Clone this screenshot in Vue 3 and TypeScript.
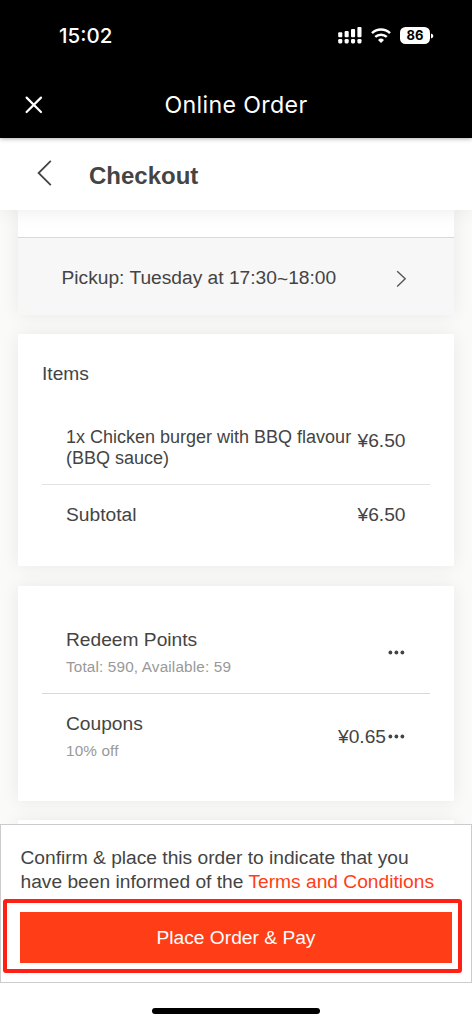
<script setup lang="ts">
interface OrderItem {
  name: string
  price: string
}

interface Benefit {
  title: string
  detail: string
  value: string
}

const items: OrderItem[] = [
  { name: '1x Chicken burger with BBQ flavour (BBQ sauce)', price: '¥6.50' },
]
const benefits: Benefit[] = [
  { title: 'Redeem Points', detail: 'Total: 590, Available: 59', value: '' },
  { title: 'Coupons', detail: '10% off', value: '¥0.65' },
]
const signalTops: number[] = [5.2, 4, 2, 0]
</script>

<template>
  <div class="phone">
    <header class="top">
      <div class="status">
        <span class="time">15:02</span>
        <div class="indicators">
          <svg class="signal" width="25" height="17" viewBox="0 0 25 17" fill="#fff">
            <template v-for="(top, i) in signalTops" :key="i">
              <rect :x="0.2 + i * 6.4" :y="top" width="4.1" :height="10.2 - top" rx="1" />
              <rect :x="0.2 + i * 6.4" y="12" width="4.1" height="4.4" rx="1.3" />
            </template>
          </svg>
          <svg class="wifi" width="20" height="15" viewBox="0 0 20 15" fill="none" stroke="#fff">
            <path d="M1 5.1A13.2 13.2 0 0 1 19 5.1" stroke-width="2.6" />
            <path d="M4.2 8.9A8.6 8.6 0 0 1 15.8 8.9" stroke-width="2.5" />
            <path d="M10 14.9L7 11.9Q10 9.2 13 11.9Z" fill="#fff" stroke="none" />
          </svg>
          <div class="battery"><span>86</span></div>
          <svg class="cap" width="3" height="6" viewBox="0 0 3 6"><path d="M0 .6Q2.4 1.4 2.4 3T0 5.4Z" fill="#fff" /></svg>
        </div>
      </div>
      <div class="appbar">
        <svg class="close" width="20" height="20" viewBox="0 0 20 20" fill="none" stroke="#fff" stroke-width="2.2" stroke-linecap="round">
          <path d="M2.6 2.6L17 17M17 2.6L2.6 17" />
        </svg>
        <span class="app-title">Online Order</span>
      </div>
    </header>

    <div class="page-head">
      <svg class="back" width="16" height="28" viewBox="0 0 16 28" fill="none" stroke="#444" stroke-width="1.8">
        <path d="M13.8 1.9L1.6 14L13.8 26.1" />
      </svg>
      <h1>Checkout</h1>
    </div>

    <main class="content">
      <section class="card pickup-card">
        <div class="pickup">
          <span>Pickup: Tuesday at 17:30<span class="tilde">~</span>18:00</span>
          <svg width="11" height="18" viewBox="0 0 11 18" fill="none" stroke="#555" stroke-width="1.4">
            <path d="M1.2 2.2L9.2 9.8L1.2 17.4" />
          </svg>
        </div>
      </section>

      <section class="card items-card">
        <h2>Items</h2>
        <div v-for="item in items" :key="item.name" class="item">
          <span class="name">{{ item.name }}</span>
          <span class="price">{{ item.price }}</span>
        </div>
        <div class="subtotal">
          <span>Subtotal</span>
          <span>¥6.50</span>
        </div>
      </section>

      <section class="card benefits-card">
        <div v-for="b in benefits" :key="b.title" class="benefit">
          <div class="labels">
            <span class="title">{{ b.title }}</span>
            <span class="detail">{{ b.detail }}</span>
          </div>
          <div class="value">
            <span>{{ b.value }}</span>
            <svg width="18" height="5" viewBox="0 0 18 5" fill="#444">
              <circle cx="2.4" cy="2.5" r="1.9" /><circle cx="8.4" cy="2.5" r="1.9" /><circle cx="14.4" cy="2.5" r="1.9" />
            </svg>
          </div>
        </div>
      </section>

      <section class="card next-card"></section>
    </main>

    <footer class="confirm">
      <p>Confirm &amp; place this order to indicate that you<br />have been informed of the <a>Terms and Conditions</a></p>
      <div class="highlight">
        <button type="button">Place Order &amp; Pay</button>
      </div>
    </footer>
    <div class="home"><i></i></div>
  </div>
</template>

<style>
html,
body {
  margin: 0;
  background: #fff;
  overflow: hidden;
}
</style>

<style scoped>
.phone {
  width: 472px;
  height: 1024px;
  display: flex;
  flex-direction: column;
  overflow: hidden;
  background: #fff;
  color: #444;
  font-family: "Liberation Sans", Arial, sans-serif;
  font-size: 19.2px;
}
.top {
  position: relative;
  z-index: 3;
  flex: none;
  height: 138px;
  background: #000;
  color: #fff;
  box-shadow: 0 0 5px rgba(0, 0, 0, 0.45);
  font-family: Inter, sans-serif;
}
.status {
  height: 70px;
  display: flex;
  justify-content: space-between;
  padding: 0 41px 0 59px;
}
.time {
  margin-top: 23px;
  font-size: 20.5px;
  line-height: 25px;
  font-weight: 550;
}
.indicators {
  display: flex;
  align-items: center;
  height: 17px;
  margin-top: 27px;
}
.wifi {
  margin: 0 9px 0 8px;
}
.battery {
  width: 30px;
  height: 17px;
  border-radius: 5.5px;
  background: #fff;
  color: #000;
  font-size: 13px;
  line-height: 17px;
  font-weight: 650;
  text-align: center;
}
.cap {
  margin-left: 0.5px;
  margin-right: -2.5px;
}
.appbar {
  height: 68px;
  display: grid;
  grid-template-columns: 1fr auto 1fr;
  align-items: center;
}
.close {
  margin: 1px 0 0 23.5px;
}
.app-title {
  margin-top: 2px;
  font-size: 23.2px;
  letter-spacing: 0.35px;
}
.page-head {
  position: relative;
  z-index: 2;
  flex: none;
  height: 72px;
  display: flex;
  align-items: center;
  gap: 36px;
  padding-left: 37px;
  box-sizing: border-box;
  background: #fff;
  box-shadow: 0 2px 18px rgba(0, 0, 0, 0.07);
}
.back {
  margin-top: -2px;
}
h1 {
  margin: 4px 0 0;
  font-size: 24px;
  line-height: 28px;
}
.content {
  flex: none;
  height: 614px;
  display: flex;
  flex-direction: column;
  padding: 0 18px;
  background: #fafaf9;
  overflow: hidden;
}
.card {
  flex: none;
  box-sizing: border-box;
  background: #fff;
  border-radius: 1px;
  box-shadow: 0 0 18px rgba(0, 0, 0, 0.075);
}
.pickup-card {
  height: 105px;
  padding-top: 27px;
}
.pickup {
  height: 78px;
  box-sizing: border-box;
  display: flex;
  align-items: center;
  justify-content: space-between;
  padding: 3px 47.5px 0 43.5px;
  border-top: 1px solid #d9d9d9;
  background: #f7f7f7;
}
.tilde {
  display: inline-block;
  transform: translateY(1px);
}
.items-card {
  height: 232px;
  margin-top: 19px;
  padding: 0 24px;
}
h2 {
  margin: 0;
  padding-top: 28.5px;
  font-size: 19.2px;
  line-height: 22px;
  font-weight: 400;
}
.item {
  height: 100px;
  box-sizing: border-box;
  display: flex;
  justify-content: space-between;
  padding: 42px 24.5px 0 24px;
  border-bottom: 1px solid #e2e2e2;
}
.name {
  width: 288px;
  font-size: 18px;
  line-height: 21.6px;
}
.price {
  padding-top: 3px;
  line-height: 22px;
}
.subtotal {
  display: flex;
  justify-content: space-between;
  padding: 19px 24.5px 0 24px;
  line-height: 22px;
}
.benefits-card {
  height: 215px;
  margin-top: 20px;
  padding: 23px 24px 0;
}
.benefit {
  height: 84px;
  box-sizing: border-box;
  display: flex;
  justify-content: space-between;
  align-items: center;
  padding: 0 24px;
}
.benefit:first-child {
  height: 85px;
  padding-top: 2px;
  border-bottom: 1px solid #d9d9d9;
}
.labels {
  display: flex;
  flex-direction: column;
  gap: 7px;
}
.title {
  line-height: 22px;
}
.detail {
  color: #999;
  font-size: 15.3px;
  line-height: 18px;
  letter-spacing: 0.15px;
}
.value {
  display: flex;
  align-items: center;
  gap: 2px;
}
.benefit:last-child .value {
  padding-top: 1px;
}
.next-card {
  height: 40px;
  margin-top: 19px;
}
.confirm {
  position: relative;
  z-index: 2;
  flex: none;
  height: 159px;
  box-sizing: border-box;
  border: 1px solid #ccc;
  background: #fff;
}
p {
  margin: 21px 0 0 19.5px;
  line-height: 24px;
  white-space: nowrap;
}
a {
  color: #ff3d17;
}
.highlight {
  width: 459px;
  height: 74px;
  box-sizing: border-box;
  margin: 5px 0 0 2px;
  padding: 9px 6px 0 13px;
  border: 4px solid #ff2013;
  border-radius: 3px;
}
button {
  display: block;
  width: 432px;
  height: 51px;
  padding: 1px 0 0;
  border: 0;
  background: #ff3d17;
  color: #fff;
  font: inherit;
}
.home {
  flex: 1;
  display: flex;
  justify-content: center;
  padding-top: 25px;
}
.home i {
  width: 168px;
  height: 6px;
  border-radius: 3px;
  background: #000;
}
</style>
